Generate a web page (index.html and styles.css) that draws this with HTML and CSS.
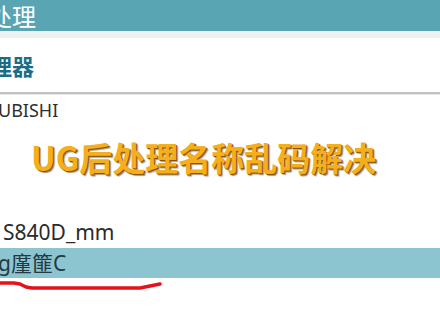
FILE: index.html
```html
<!DOCTYPE html>
<html>
<head>
<meta charset="utf-8">
<link rel="stylesheet" href="styles.css">
</head>
<body>
<div class="page">
  <div class="header"><span class="header-text">处理</span></div>
  <div class="band"></div>
  <div class="row-proc"><span class="proc-text">理器</span></div>
  <div class="divider"></div>
  <div class="row-brand"><span class="brand-text">UBISHI</span></div>
  <div class="title-row"><span class="title">UG后处理名称乱码解决</span></div>
  <div class="row-item"><span class="item-text">S840D_mm</span></div>
  <div class="row-selected"><span class="item-text sel">g廑篚C</span></div>
  <svg class="redline" width="170" height="14" viewBox="0 0 170 14">
    <path d="M0 4 L14 4 L20 5 L26 8 L32 9 L140 9 L150 7 L160 5" fill="none" stroke="#e5121c" stroke-width="3.5" stroke-linecap="round" stroke-linejoin="round"/>
  </svg>
</div>
</body>
</html>
```
FILE: styles.css
```css
html, body {
  margin: 0;
  padding: 0;
  background: #ffffff;
  overflow: hidden;
}
.page {
  position: relative;
  width: 440px;
  height: 330px;
  overflow: hidden;
  font-family: "Noto Sans", "Noto Sans CJK SC", sans-serif;
}
.header {
  height: 31px;
  background: #5aa5b3;
  display: flex;
  align-items: center;
}
.header-text {
  margin-left: -12px;
  font-family: "Noto Sans CJK SC", sans-serif;
  font-size: 24px;
  color: #ffffff;
  line-height: 1;
}
.band {
  height: 7px;
  background: #eef1f1;
}
.row-proc {
  height: 54px;
  display: flex;
  align-items: center;
}
.proc-text {
  margin-left: -10px;
  font-family: "Noto Sans CJK SC", sans-serif;
  font-size: 22px;
  font-weight: 700;
  color: #1b6d86;
  line-height: 1;
}
.divider {
  height: 2px;
  background: #c2c2c2;
  border-bottom: 1px solid #e6e6e6;
}
.row-brand {
  height: 29px;
  display: flex;
  align-items: center;
}
.brand-text {
  margin-left: -2px;
  font-size: 18px;
  color: #2e2e2e;
  line-height: 1;
}
.title-row {
  height: 67px;
  padding-bottom: 26px;
  display: flex;
  align-items: center;
  padding-left: 31px;
}
.title {
  font-family: "Noto Sans CJK SC", sans-serif;
  font-size: 33px;
  font-weight: 700;
  color: #f5ae1c;
  line-height: 1;
  text-shadow: 1px 1px 0 #8a5200, 2px 2px 1px rgba(90, 50, 0, 0.5);
}
.row-item {
  height: 31px;
  display: flex;
  align-items: center;
  padding-left: 3px;
}
.item-text {
  font-family: "Noto Sans", "Noto Sans CJK SC", sans-serif;
  font-size: 21px;
  color: #2a2a2a;
  line-height: 1;
}
.row-selected {
  height: 30px;
  background: #8cc5cf;
  display: flex;
  align-items: center;
}
.sel {
  margin-left: -2px;
  color: #223a44;
}
.redline {
  position: absolute;
  left: 0;
  top: 279px;
}
```
